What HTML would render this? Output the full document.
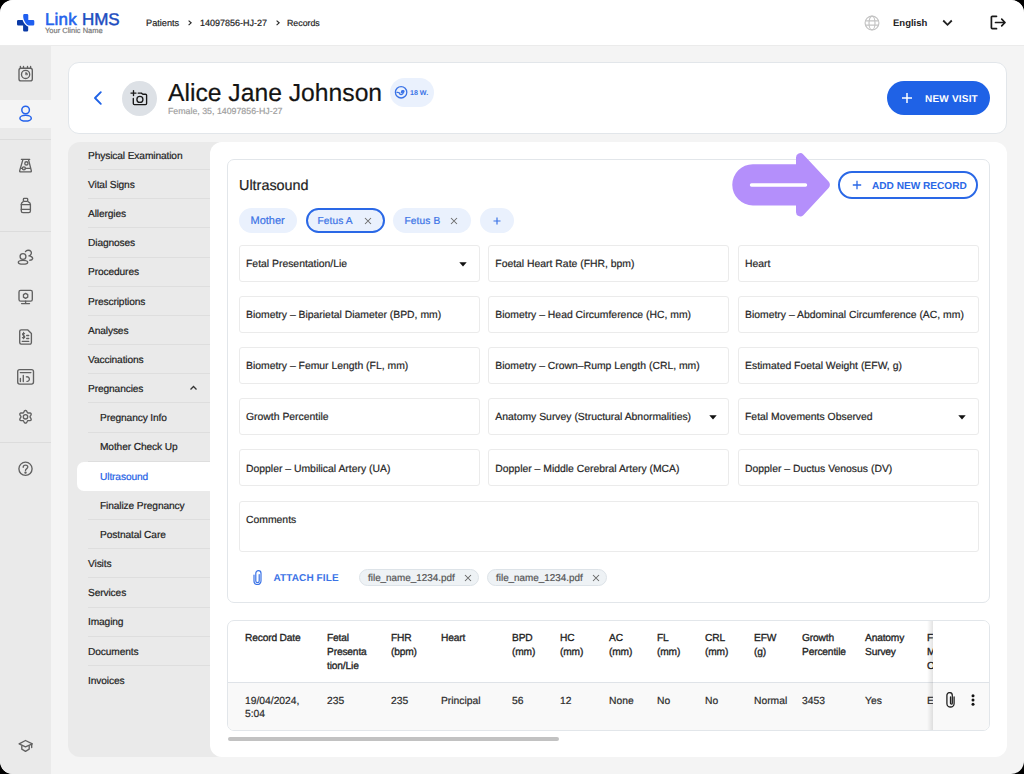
<!DOCTYPE html>
<html><head><meta charset="utf-8">
<style>
*{box-sizing:border-box;margin:0;padding:0}
html,body{width:1024px;height:774px;overflow:hidden;background:#000}
body{font-family:"Liberation Sans",sans-serif;color:#222}
#screen{position:absolute;left:0;top:0;width:1024px;height:774px;background:#f4f4f4;border-radius:13px;overflow:hidden}
.abs{position:absolute}
.t{position:absolute;white-space:nowrap;line-height:1;text-rendering:geometricPrecision;-webkit-text-stroke:0.2px currentColor}
</style></head>
<body>
<div id="screen">
<div class="abs" style="left:0px;top:0px;width:1024px;height:45px;background:#fff"></div>
<div class="abs" style="left:0px;top:45px;width:1024px;height:1px;background:#ebebeb"></div>
<div class="abs" style="left:0px;top:46px;width:51px;height:728px;background:#eaeaea"></div>
<div class="abs" style="left:0px;top:100px;width:51px;height:28px;background:#f4f4f4"></div>
<div class="abs" style="left:0px;top:139px;width:51px;height:1px;background:#dcdcdc"></div>
<div class="abs" style="left:0px;top:231px;width:51px;height:1px;background:#dcdcdc"></div>
<div class="abs" style="left:0px;top:442px;width:51px;height:1px;background:#dcdcdc"></div>
<svg class="abs" style="left:17px;top:14px" width="18" height="18" viewBox="0 0 18 18">
<path d="M6.2 1.3Q6.2 0 7.5 0H10Q11.3 0 11.3 1.3V6H16Q17.3 6 17.3 7.3V10.2Q17.3 11.6 16 11.6H12C9.5 11.2 6.6 7 6.2 3Z" fill="#1f5ff0"/>
<path d="M0 7.3Q0 6 1.3 6H5.6C6.5 9 9.2 12 11.2 12.6V16.2Q11.2 17.5 9.9 17.5H7.4Q6.1 17.5 6.1 16.2V11.6H1.3Q0 11.6 0 10.3Z" fill="#0a3aa6"/>
</svg>
<div class="t" style="left:45.00px;top:11px;font-size:17px;color:#2563eb;letter-spacing:0.15px;-webkit-text-stroke:0.55px #2563eb">Link</div>
<div class="t" style="left:82.00px;top:11px;font-size:17px;color:#1c4cc0;letter-spacing:-0.1px;-webkit-text-stroke:0.45px #1c4cc0">HMS</div>
<div class="t" style="left:45.00px;top:27px;font-size:7.5px;color:#7a7a7a">Your Clinic Name</div>
<div class="t" style="left:146.00px;top:19px;font-size:9.2px;color:#1e1e1e">Patients</div>
<svg class="abs" style="left:186px;top:19px" width="8" height="8" viewBox="0 0 8 8"><path d="M2.6 1.6L5.1 3.85L2.6 6.1" fill="none" stroke="#2a2a2a" stroke-width="1.2"/></svg>
<div class="t" style="left:200.00px;top:19px;font-size:9.0px;color:#1e1e1e">14097856-HJ-27</div>
<svg class="abs" style="left:273.5px;top:19px" width="8" height="8" viewBox="0 0 8 8"><path d="M2.6 1.6L5.1 3.85L2.6 6.1" fill="none" stroke="#2a2a2a" stroke-width="1.2"/></svg>
<div class="t" style="left:287.00px;top:19px;font-size:8.8px;color:#1e1e1e">Records</div>
<svg class="abs" style="left:864px;top:15px" width="16" height="16" viewBox="0 0 16 16" fill="none" stroke="#c4c4c4" stroke-width="1.2"><circle cx="8" cy="8" r="6.9"/><ellipse cx="8" cy="8" rx="3" ry="6.9"/><path d="M1.3 5.8h13.4M1.3 10.2h13.4"/></svg>
<div class="t" style="left:893.00px;top:19px;font-size:9.5px;color:#222;font-weight:700;-webkit-text-stroke:0">English</div>
<svg class="abs" style="left:942px;top:19px" width="11" height="8" viewBox="0 0 11 8"><path d="M1.2 1.5L5.5 5.8L9.8 1.5" fill="none" stroke="#222" stroke-width="1.8"/></svg>
<svg class="abs" style="left:990px;top:15px" width="17" height="15" viewBox="0 0 17 15" fill="none" stroke="#1a1a1a" stroke-width="1.7" stroke-linecap="round" stroke-linejoin="round"><path d="M6.5 1.3H2.3a0.9 0.9 0 0 0-0.9 0.9v10.6a0.9 0.9 0 0 0 0.9 0.9h4.2"/><path d="M5.5 7.5h9.5M11.7 4.2l3.3 3.3l-3.3 3.3"/></svg>
<svg class="abs" style="left:0;top:45px" width="51" height="729" viewBox="0 45 51 729" fill="none" stroke="#616161" stroke-width="1.35" stroke-linecap="round" stroke-linejoin="round">
<rect x="19" y="68.2" width="13.3" height="12.7" rx="2"/>
<path d="M20.4 66.4v1.8M23.5 66.4v1.8M27.5 66.4v1.8M30.6 66.4v1.8"/>
<circle cx="25.6" cy="74.4" r="4.1"/>
<path d="M25.6 74.5V72.4A2.1 2.1 0 0 1 27.6 74.5Z" fill="#616161" stroke-width="0.6"/>
<g stroke="#2563eb" stroke-width="1.5"><circle cx="25.6" cy="110" r="3.8"/><ellipse cx="25.6" cy="118.2" rx="5.7" ry="2.9"/></g>
<path d="M21.4 159.3h8.3"/>
<path d="M22.9 159.6L19.7 170.6Q19.4 171.8 20.6 171.8H30.4Q31.6 171.8 31.3 170.6L28.5 159.6"/>
<path d="M21.1 168.3h1.3M25.4 168.3h4.8"/>
<circle cx="26.4" cy="163.4" r="1.6"/><circle cx="23.9" cy="168.3" r="1.5"/>
<rect x="23.4" y="198.4" width="4.3" height="3" rx="0.8"/>
<path d="M23.2 201.6Q21.3 202.6 21.3 204.2V211a1.6 1.6 0 0 0 1.6 1.6H28.8a1.6 1.6 0 0 0 1.6-1.6V204.2Q30.4 202.6 28 201.6"/>
<path d="M21.3 204.6h9.1M21.3 209.4h9.1"/>
<circle cx="23" cy="256.5" r="2.9"/>
<ellipse cx="23" cy="262.2" rx="4.7" ry="1.9"/>
<path d="M25.5 251.6C26.5 250 29.5 249.6 30.9 251.4C32 253 31 255.5 28.9 255.9C31 256 33 257.5 32.6 258.8C32.3 259.8 31 260.2 29.8 260.2"/>
<rect x="19" y="290.4" width="13.3" height="10.7" rx="1.6"/>
<path d="M25.6 301.1v2.5M21.6 303.6h7.9"/>
<path d="M25.6 293.4L27.75 294.65V297.15L25.6 298.4L23.45 297.15V294.65Z" stroke-width="1.3"/>
<path d="M21 329.8H27.6L31.4 333.5V342.6A1.5 1.5 0 0 1 29.9 344.1H21.2A1.5 1.5 0 0 1 19.7 342.6V331.3A1.5 1.5 0 0 1 21.2 329.8Z"/>
<path d="M22.3 341.4h6.4M26.7 335.5h2M26.7 338.5h2"/>
<path d="M24.6 333.6C24 333 22.5 333.1 22.5 334.3C22.5 335.6 24.8 335.4 24.8 336.9C24.8 338.1 23.2 338.2 22.4 337.5M23.6 332.2v6.6" stroke-width="1.1"/>
<rect x="17.7" y="369.6" width="15.8" height="14.5" rx="2"/>
<path d="M20.3 372.6h10.6M20.4 378.5v3.1M23.3 375.4v6.2"/>
<path d="M26.4 376.9A2.3 2.3 0 1 1 27 381.4"/>
<path d="M30.00 416.80L30.11 416.40L30.40 415.94L30.76 415.39L31.07 414.77L31.19 414.15L31.04 413.60L30.64 413.20L30.04 412.99L29.35 412.95L28.70 412.99L28.15 413.01L27.75 412.90L27.46 412.61L27.20 412.13L26.91 411.54L26.53 410.97L26.05 410.55L25.50 410.40L24.95 410.55L24.47 410.97L24.09 411.54L23.80 412.13L23.54 412.61L23.25 412.90L22.85 413.01L22.30 412.99L21.65 412.95L20.96 412.99L20.36 413.20L19.96 413.60L19.81 414.15L19.93 414.77L20.24 415.39L20.60 415.94L20.89 416.40L21.00 416.80L20.89 417.20L20.60 417.66L20.24 418.21L19.93 418.83L19.81 419.45L19.96 420.00L20.36 420.40L20.96 420.61L21.65 420.65L22.30 420.61L22.85 420.59L23.25 420.70L23.54 420.99L23.80 421.47L24.09 422.06L24.47 422.63L24.95 423.05L25.50 423.20L26.05 423.05L26.53 422.63L26.91 422.06L27.20 421.47L27.46 420.99L27.75 420.70L28.15 420.59L28.70 420.61L29.35 420.65L30.04 420.61L30.64 420.40L31.04 420.00L31.19 419.45L31.07 418.83L30.76 418.21L30.40 417.66L30.11 417.20L30.00 416.80Z"/>
<circle cx="25.5" cy="416.8" r="2.2"/>
<circle cx="25.5" cy="468.8" r="6.6"/>
<path d="M23.2 467.2C23.2 465.9 24.2 465.1 25.5 465.1C26.8 465.1 27.8 465.9 27.8 467C27.8 468.6 25.5 468.7 25.5 470.6"/>
<circle cx="25.5" cy="472.6" r="0.55" fill="#616161"/>
<path d="M19.1 743.9L25.5 740.5L32.3 743.8L25.5 746.9Z"/>
<path d="M21.8 745.9V749.2L25.5 751.3L29.2 749.2V745.9M31.7 744.2V747.6"/>
</svg>
<div class="abs" style="left:68px;top:62px;width:939px;height:72px;background:#fff;border:1px solid #e2e6ea;border-radius:11px"></div>
<svg class="abs" style="left:92px;top:90px" width="12" height="16" viewBox="0 0 12 16"><path d="M8.8 2.2L3 8L8.8 13.8" fill="none" stroke="#1f62e6" stroke-width="1.9" stroke-linecap="round" stroke-linejoin="round"/></svg>
<div class="abs" style="left:122px;top:81px;width:35px;height:35px;border-radius:50%;background:#dde1e6"></div>
<svg class="abs" style="left:128px;top:86px" width="24" height="24" viewBox="128 86 24 24" fill="none" stroke="#1a1a1a" stroke-width="1.35" stroke-linecap="round" stroke-linejoin="round">
<path d="M133.5 90.6v5M131 93.1h5"/>
<path d="M133.3 98.4V103.5Q133.3 104.6 134.4 104.6H145.5Q146.6 104.6 146.6 103.5V95.3Q146.6 94.2 145.5 94.2H142.8L141.4 93.1H138.2"/>
<circle cx="139.9" cy="99.4" r="3"/></svg>
<div class="t" style="left:168.00px;top:82px;font-size:24.7px;color:#141414">Alice Jane Johnson</div>
<div class="t" style="left:168.00px;top:107px;font-size:8.8px;color:#a0a0a0">Female, 35, 14097856-HJ-27</div>
<div class="abs" style="left:390px;top:78px;width:44px;height:29px;border-radius:15px;background:#eaf1fd"></div>
<svg class="abs" style="left:392px;top:83px" width="18" height="18" viewBox="0 0 18 18" fill="none" stroke="#3b73e6" stroke-width="1.3" stroke-linecap="round">
<circle cx="9.1" cy="9.3" r="5.7"/>
<path d="M5 9.4Q6.2 9.1 7.2 9.8Q7.8 11.8 9.2 11.6Q10.8 11.4 11.4 9.6"/>
<path d="M9.3 9.5Q9.7 7.9 11.2 8"/>
<ellipse cx="10.9" cy="8.5" rx="1.1" ry="0.8"/></svg>
<div class="t" style="left:410.00px;top:90px;font-size:7.1px;color:#3b73e6;font-weight:700;-webkit-text-stroke:0">18 W.</div>
<div class="abs" style="left:887px;top:81px;width:103px;height:34px;border-radius:17px;background:#1f62e6"></div>
<svg class="abs" style="left:901px;top:92px" width="12" height="12" viewBox="0 0 12 12"><path d="M6 1v10M1 6h10" stroke="#fff" stroke-width="1.5"/></svg>
<div class="t" style="left:925.00px;top:95px;font-size:10px;color:#fff;font-weight:700;-webkit-text-stroke:0;letter-spacing:0.2px">NEW VISIT</div>
<div class="abs" style="left:68px;top:142px;width:160px;height:615px;border-radius:12px;background:#eaeaea"></div>
<div class="abs" style="left:88px;top:169px;width:122px;height:1px;background:#dedede"></div>
<div class="abs" style="left:88px;top:198px;width:122px;height:1px;background:#dedede"></div>
<div class="abs" style="left:88px;top:227px;width:122px;height:1px;background:#dedede"></div>
<div class="abs" style="left:88px;top:257px;width:122px;height:1px;background:#dedede"></div>
<div class="abs" style="left:88px;top:286px;width:122px;height:1px;background:#dedede"></div>
<div class="abs" style="left:88px;top:315px;width:122px;height:1px;background:#dedede"></div>
<div class="abs" style="left:88px;top:344px;width:122px;height:1px;background:#dedede"></div>
<div class="abs" style="left:88px;top:373px;width:122px;height:1px;background:#dedede"></div>
<div class="abs" style="left:88px;top:402px;width:122px;height:1px;background:#dedede"></div>
<div class="abs" style="left:88px;top:432px;width:122px;height:1px;background:#dedede"></div>
<div class="abs" style="left:88px;top:461px;width:122px;height:1px;background:#dedede"></div>
<div class="abs" style="left:88px;top:519px;width:122px;height:1px;background:#dedede"></div>
<div class="abs" style="left:88px;top:548px;width:122px;height:1px;background:#dedede"></div>
<div class="abs" style="left:88px;top:577px;width:122px;height:1px;background:#dedede"></div>
<div class="abs" style="left:88px;top:607px;width:122px;height:1px;background:#dedede"></div>
<div class="abs" style="left:88px;top:636px;width:122px;height:1px;background:#dedede"></div>
<div class="abs" style="left:88px;top:665px;width:122px;height:1px;background:#dedede"></div>
<div class="t" style="left:88.00px;top:152px;font-size:10.2px;color:#222;letter-spacing:-0.12px">Physical Examination</div>
<div class="t" style="left:88.00px;top:181px;font-size:10.2px;color:#222;letter-spacing:-0.12px">Vital Signs</div>
<div class="t" style="left:88.00px;top:210px;font-size:10.2px;color:#222;letter-spacing:-0.12px">Allergies</div>
<div class="t" style="left:88.00px;top:239px;font-size:10.2px;color:#222;letter-spacing:-0.12px">Diagnoses</div>
<div class="t" style="left:88.00px;top:268px;font-size:10.2px;color:#222;letter-spacing:-0.12px">Procedures</div>
<div class="t" style="left:88.00px;top:298px;font-size:10.2px;color:#222;letter-spacing:-0.12px">Prescriptions</div>
<div class="t" style="left:88.00px;top:327px;font-size:10.2px;color:#222;letter-spacing:-0.12px">Analyses</div>
<div class="t" style="left:88.00px;top:356px;font-size:10.2px;color:#222;letter-spacing:-0.12px">Vaccinations</div>
<div class="t" style="left:88.00px;top:385px;font-size:10.2px;color:#222;letter-spacing:-0.12px">Pregnancies</div>
<div class="t" style="left:100.00px;top:414px;font-size:10.2px;color:#222;letter-spacing:-0.12px">Pregnancy Info</div>
<div class="t" style="left:100.00px;top:443px;font-size:10.2px;color:#222;letter-spacing:-0.12px">Mother Check Up</div>
<div class="abs" style="left:77px;top:462px;width:140px;height:28.5px;background:#fff;border-radius:7px 0 0 7px"></div>
<div class="t" style="left:100.00px;top:473px;font-size:10.2px;color:#1f62e6;letter-spacing:-0.12px">Ultrasound</div>
<div class="t" style="left:100.00px;top:502px;font-size:10.2px;color:#222;letter-spacing:-0.12px">Finalize Pregnancy</div>
<div class="t" style="left:100.00px;top:531px;font-size:10.2px;color:#222;letter-spacing:-0.12px">Postnatal Care</div>
<div class="t" style="left:88.00px;top:560px;font-size:10.2px;color:#222;letter-spacing:-0.12px">Visits</div>
<div class="t" style="left:88.00px;top:589px;font-size:10.2px;color:#222;letter-spacing:-0.12px">Services</div>
<div class="t" style="left:88.00px;top:618px;font-size:10.2px;color:#222;letter-spacing:-0.12px">Imaging</div>
<div class="t" style="left:88.00px;top:648px;font-size:10.2px;color:#222;letter-spacing:-0.12px">Documents</div>
<div class="t" style="left:88.00px;top:677px;font-size:10.2px;color:#222;letter-spacing:-0.12px">Invoices</div>
<svg class="abs" style="left:189px;top:385px" width="9" height="6" viewBox="0 0 9 6"><path d="M1.5 4.5L4.5 1.5L7.5 4.5" fill="none" stroke="#333" stroke-width="1.3"/></svg>
<div class="abs" style="left:210px;top:142px;width:797px;height:615px;border-radius:12px;background:#fff"></div>
<div class="abs" style="left:227px;top:159px;width:763px;height:444px;background:#fff;border:1px solid #e2e6ea;border-radius:7px"></div>
<div class="t" style="left:239.00px;top:179px;font-size:14.4px;color:#1e1e1e">Ultrasound</div>
<div class="abs" style="left:239px;top:208px;width:58px;height:25px;border-radius:13px;background:#eaf1fd"></div>
<div class="abs" style="left:306px;top:208px;width:79px;height:25px;border-radius:13px;background:#eaf1fd;border:2px solid #2a68e6"></div>
<div class="abs" style="left:393px;top:208px;width:78px;height:25px;border-radius:13px;background:#eaf1fd"></div>
<div class="abs" style="left:480px;top:208px;width:34px;height:25px;border-radius:13px;background:#eaf1fd"></div>
<div class="t" style="left:250.50px;top:216px;font-size:11px;color:#3b73e6">Mother</div>
<div class="t" style="left:317.50px;top:217px;font-size:10.2px;color:#3b73e6;letter-spacing:0.1px">Fetus A</div>
<div class="t" style="left:404.50px;top:217px;font-size:10.2px;color:#3b73e6;letter-spacing:0.1px">Fetus B</div>
<svg class="abs" style="left:364px;top:216.5px" width="8" height="8" viewBox="0 0 8 8"><path d="M1 1L7 7M7 1L1 7" stroke="#6b6b6b" stroke-width="1.05"/></svg>
<svg class="abs" style="left:450px;top:216.5px" width="8" height="8" viewBox="0 0 8 8"><path d="M1 1L7 7M7 1L1 7" stroke="#6b6b6b" stroke-width="1.05"/></svg>
<svg class="abs" style="left:493px;top:216.5px" width="8" height="8" viewBox="0 0 8 8"><path d="M4 0.5v7M0.5 4h7" stroke="#3b73e6" stroke-width="1.2"/></svg>
<div class="abs" style="left:838px;top:171px;width:140px;height:28px;border-radius:14px;border:2px solid #2a68e6;background:#fff"></div>
<svg class="abs" style="left:851.5px;top:179.8px" width="10" height="10" viewBox="0 0 10 10"><path d="M5 0.8v8.4M0.8 5h8.4" stroke="#2a68e6" stroke-width="1.3"/></svg>
<div class="t" style="left:872.00px;top:182px;font-size:10.1px;color:#2a68e6;font-weight:700;-webkit-text-stroke:0">ADD NEW RECORD</div>
<svg class="abs" style="left:730px;top:150px" width="104" height="70" viewBox="730 150 104 70">
<path d="M752.8 164.3H796V157.5A4.3 4.3 0 0 1 803.3 154.4L828.6 181.6A4.6 4.6 0 0 1 828.6 188L803.3 215.2A4.3 4.3 0 0 1 796 212.2V205.4H752.8A20.55 20.55 0 0 1 752.8 164.3Z" fill="#b48ffb"/>
<path d="M751.5 185H805.5" stroke="#fff" stroke-width="3.4" stroke-linecap="round"/></svg>
<div class="abs" style="left:239px;top:245px;width:240.7px;height:36.5px;border:1px solid #ebebeb;border-radius:3px"></div>
<div class="t" style="left:246.00px;top:260px;font-size:10.4px;color:#262626">Fetal Presentation/Lie</div>
<svg class="abs" style="left:459.2px;top:261.5px" width="8" height="5" viewBox="0 0 8 5"><path d="M0.3 0.3H7.7L4 4.5Z" fill="#111"/></svg>
<div class="abs" style="left:488.3px;top:245px;width:240.7px;height:36.5px;border:1px solid #ebebeb;border-radius:3px"></div>
<div class="t" style="left:495.30px;top:260px;font-size:10.4px;color:#262626">Foetal Heart Rate (FHR, bpm)</div>
<div class="abs" style="left:738px;top:245px;width:240.7px;height:36.5px;border:1px solid #ebebeb;border-radius:3px"></div>
<div class="t" style="left:745.00px;top:260px;font-size:10.4px;color:#262626">Heart</div>
<div class="abs" style="left:239px;top:296px;width:240.7px;height:36.5px;border:1px solid #ebebeb;border-radius:3px"></div>
<div class="t" style="left:246.00px;top:311px;font-size:10.4px;color:#262626">Biometry – Biparietal Diameter (BPD, mm)</div>
<div class="abs" style="left:488.3px;top:296px;width:240.7px;height:36.5px;border:1px solid #ebebeb;border-radius:3px"></div>
<div class="t" style="left:495.30px;top:311px;font-size:10.4px;color:#262626">Biometry – Head Circumference (HC, mm)</div>
<div class="abs" style="left:738px;top:296px;width:240.7px;height:36.5px;border:1px solid #ebebeb;border-radius:3px"></div>
<div class="t" style="left:745.00px;top:311px;font-size:10.4px;color:#262626">Biometry – Abdominal Circumference (AC, mm)</div>
<div class="abs" style="left:239px;top:347.1px;width:240.7px;height:36.5px;border:1px solid #ebebeb;border-radius:3px"></div>
<div class="t" style="left:246.00px;top:362px;font-size:10.4px;color:#262626">Biometry – Femur Length (FL, mm)</div>
<div class="abs" style="left:488.3px;top:347.1px;width:240.7px;height:36.5px;border:1px solid #ebebeb;border-radius:3px"></div>
<div class="t" style="left:495.30px;top:362px;font-size:10.4px;color:#262626">Biometry – Crown–Rump Length (CRL, mm)</div>
<div class="abs" style="left:738px;top:347.1px;width:240.7px;height:36.5px;border:1px solid #ebebeb;border-radius:3px"></div>
<div class="t" style="left:745.00px;top:362px;font-size:10.4px;color:#262626">Estimated Foetal Weight (EFW, g)</div>
<div class="abs" style="left:239px;top:398.3px;width:240.7px;height:36.5px;border:1px solid #ebebeb;border-radius:3px"></div>
<div class="t" style="left:246.00px;top:413px;font-size:10.4px;color:#262626">Growth Percentile</div>
<div class="abs" style="left:488.3px;top:398.3px;width:240.7px;height:36.5px;border:1px solid #ebebeb;border-radius:3px"></div>
<div class="t" style="left:495.30px;top:413px;font-size:10.4px;color:#262626">Anatomy Survey (Structural Abnormalities)</div>
<svg class="abs" style="left:708.5px;top:414.8px" width="8" height="5" viewBox="0 0 8 5"><path d="M0.3 0.3H7.7L4 4.5Z" fill="#111"/></svg>
<div class="abs" style="left:738px;top:398.3px;width:240.7px;height:36.5px;border:1px solid #ebebeb;border-radius:3px"></div>
<div class="t" style="left:745.00px;top:413px;font-size:10.4px;color:#262626">Fetal Movements Observed</div>
<svg class="abs" style="left:958.2px;top:414.8px" width="8" height="5" viewBox="0 0 8 5"><path d="M0.3 0.3H7.7L4 4.5Z" fill="#111"/></svg>
<div class="abs" style="left:239px;top:449.4px;width:240.7px;height:36.5px;border:1px solid #ebebeb;border-radius:3px"></div>
<div class="t" style="left:246.00px;top:465px;font-size:10.4px;color:#262626">Doppler – Umbilical Artery (UA)</div>
<div class="abs" style="left:488.3px;top:449.4px;width:240.7px;height:36.5px;border:1px solid #ebebeb;border-radius:3px"></div>
<div class="t" style="left:495.30px;top:465px;font-size:10.4px;color:#262626">Doppler – Middle Cerebral Artery (MCA)</div>
<div class="abs" style="left:738px;top:449.4px;width:240.7px;height:36.5px;border:1px solid #ebebeb;border-radius:3px"></div>
<div class="t" style="left:745.00px;top:465px;font-size:10.4px;color:#262626">Doppler – Ductus Venosus (DV)</div>
<div class="abs" style="left:239px;top:501px;width:740px;height:50.5px;border:1px solid #ebebeb;border-radius:3px"></div>
<div class="t" style="left:246.00px;top:516px;font-size:10.4px;color:#262626">Comments</div>
<svg class="abs" style="left:252px;top:570px" width="11" height="15" viewBox="0 0 11 15" fill="none" stroke="#3b73e6" stroke-width="1.2" stroke-linecap="round"><path d="M7.2 4.5V11a1.7 1.7 0 0 1-3.4 0V3.2a2.6 2.6 0 0 1 5.2 0V11a3.5 3.5 0 0 1-7 0V5"/></svg>
<div class="t" style="left:273.50px;top:574px;font-size:10px;color:#3b73e6;font-weight:700;-webkit-text-stroke:0;letter-spacing:0.1px">ATTACH FILE</div>
<div class="abs" style="left:359px;top:569px;width:120px;height:17px;border-radius:9px;background:#eef2f5;border:1px solid #dde3e8"></div>
<div class="t" style="left:368.00px;top:574px;font-size:9.9px;color:#555">file_name_1234.pdf</div>
<svg class="abs" style="left:463.5px;top:573.5px" width="8" height="8" viewBox="0 0 8 8"><path d="M1 1L7 7M7 1L1 7" stroke="#666" stroke-width="1.05"/></svg>
<div class="abs" style="left:487px;top:569px;width:120px;height:17px;border-radius:9px;background:#eef2f5;border:1px solid #dde3e8"></div>
<div class="t" style="left:496.00px;top:574px;font-size:9.9px;color:#555">file_name_1234.pdf</div>
<svg class="abs" style="left:591.5px;top:573.5px" width="8" height="8" viewBox="0 0 8 8"><path d="M1 1L7 7M7 1L1 7" stroke="#666" stroke-width="1.05"/></svg>
<div class="abs" style="left:227px;top:620px;width:763px;height:111px;background:#fff;border:1px solid #e2e6ea;border-radius:7px;overflow:hidden"></div>
<div class="abs" style="left:228px;top:682px;width:761px;height:48px;background:#f9f9f9;border-top:1px solid #dfe3e8;border-radius:0 0 6px 6px"></div>
<div class="abs" style="left:228px;top:621px;width:705px;height:109px;overflow:hidden">
<div class="t" style="left:17.00px;top:13px;font-size:10.2px;color:#222;letter-spacing:-0.15px;-webkit-text-stroke:0.3px #222">Record Date</div>
<div class="t" style="left:99.00px;top:13px;font-size:10.2px;color:#222;letter-spacing:-0.15px;-webkit-text-stroke:0.3px #222">Fetal</div>
<div class="t" style="left:99.00px;top:27px;font-size:10.2px;color:#222;letter-spacing:-0.15px;-webkit-text-stroke:0.3px #222">Presenta</div>
<div class="t" style="left:99.00px;top:41px;font-size:10.2px;color:#222;letter-spacing:-0.15px;-webkit-text-stroke:0.3px #222">tion/Lie</div>
<div class="t" style="left:163.00px;top:13px;font-size:10.2px;color:#222;letter-spacing:-0.15px;-webkit-text-stroke:0.3px #222">FHR</div>
<div class="t" style="left:163.00px;top:27px;font-size:10.2px;color:#222;letter-spacing:-0.15px;-webkit-text-stroke:0.3px #222">(bpm)</div>
<div class="t" style="left:213.00px;top:13px;font-size:10.2px;color:#222;letter-spacing:-0.15px;-webkit-text-stroke:0.3px #222">Heart</div>
<div class="t" style="left:284.00px;top:13px;font-size:10.2px;color:#222;letter-spacing:-0.15px;-webkit-text-stroke:0.3px #222">BPD</div>
<div class="t" style="left:284.00px;top:27px;font-size:10.2px;color:#222;letter-spacing:-0.15px;-webkit-text-stroke:0.3px #222">(mm)</div>
<div class="t" style="left:332.00px;top:13px;font-size:10.2px;color:#222;letter-spacing:-0.15px;-webkit-text-stroke:0.3px #222">HC</div>
<div class="t" style="left:332.00px;top:27px;font-size:10.2px;color:#222;letter-spacing:-0.15px;-webkit-text-stroke:0.3px #222">(mm)</div>
<div class="t" style="left:381.00px;top:13px;font-size:10.2px;color:#222;letter-spacing:-0.15px;-webkit-text-stroke:0.3px #222">AC</div>
<div class="t" style="left:381.00px;top:27px;font-size:10.2px;color:#222;letter-spacing:-0.15px;-webkit-text-stroke:0.3px #222">(mm)</div>
<div class="t" style="left:429.00px;top:13px;font-size:10.2px;color:#222;letter-spacing:-0.15px;-webkit-text-stroke:0.3px #222">FL</div>
<div class="t" style="left:429.00px;top:27px;font-size:10.2px;color:#222;letter-spacing:-0.15px;-webkit-text-stroke:0.3px #222">(mm)</div>
<div class="t" style="left:477.00px;top:13px;font-size:10.2px;color:#222;letter-spacing:-0.15px;-webkit-text-stroke:0.3px #222">CRL</div>
<div class="t" style="left:477.00px;top:27px;font-size:10.2px;color:#222;letter-spacing:-0.15px;-webkit-text-stroke:0.3px #222">(mm)</div>
<div class="t" style="left:526.00px;top:13px;font-size:10.2px;color:#222;letter-spacing:-0.15px;-webkit-text-stroke:0.3px #222">EFW</div>
<div class="t" style="left:526.00px;top:27px;font-size:10.2px;color:#222;letter-spacing:-0.15px;-webkit-text-stroke:0.3px #222">(g)</div>
<div class="t" style="left:574.00px;top:13px;font-size:10.2px;color:#222;letter-spacing:-0.15px;-webkit-text-stroke:0.3px #222">Growth</div>
<div class="t" style="left:574.00px;top:27px;font-size:10.2px;color:#222;letter-spacing:-0.15px;-webkit-text-stroke:0.3px #222">Percentile</div>
<div class="t" style="left:637.00px;top:13px;font-size:10.2px;color:#222;letter-spacing:-0.15px;-webkit-text-stroke:0.3px #222">Anatomy</div>
<div class="t" style="left:637.00px;top:27px;font-size:10.2px;color:#222;letter-spacing:-0.15px;-webkit-text-stroke:0.3px #222">Survey</div>
<div class="t" style="left:699.00px;top:13px;font-size:10.2px;color:#222;letter-spacing:-0.15px;-webkit-text-stroke:0.3px #222">Fetal</div>
<div class="t" style="left:699.00px;top:27px;font-size:10.2px;color:#222;letter-spacing:-0.15px;-webkit-text-stroke:0.3px #222">Movements</div>
<div class="t" style="left:699.00px;top:41px;font-size:10.2px;color:#222;letter-spacing:-0.15px;-webkit-text-stroke:0.3px #222">Observed</div>
<div class="t" style="left:17.00px;top:76px;font-size:10.3px;color:#2a2a2a">19/04/2024,</div>
<div class="t" style="left:17.00px;top:89px;font-size:10.3px;color:#2a2a2a">5:04</div>
<div class="t" style="left:99.00px;top:76px;font-size:10.3px;color:#2a2a2a">235</div>
<div class="t" style="left:163.00px;top:76px;font-size:10.3px;color:#2a2a2a">235</div>
<div class="t" style="left:213.00px;top:76px;font-size:10.3px;color:#2a2a2a">Principal</div>
<div class="t" style="left:284.00px;top:76px;font-size:10.3px;color:#2a2a2a">56</div>
<div class="t" style="left:332.00px;top:76px;font-size:10.3px;color:#2a2a2a">12</div>
<div class="t" style="left:381.00px;top:76px;font-size:10.3px;color:#2a2a2a">None</div>
<div class="t" style="left:429.00px;top:76px;font-size:10.3px;color:#2a2a2a">No</div>
<div class="t" style="left:477.00px;top:76px;font-size:10.3px;color:#2a2a2a">No</div>
<div class="t" style="left:526.00px;top:76px;font-size:10.3px;color:#2a2a2a">Normal</div>
<div class="t" style="left:574.00px;top:76px;font-size:10.3px;color:#2a2a2a">3453</div>
<div class="t" style="left:637.00px;top:76px;font-size:10.3px;color:#2a2a2a">Yes</div>
<div class="t" style="left:699.00px;top:76px;font-size:10.3px;color:#2a2a2a">Excellent</div>
</div>
<div class="abs" style="left:927px;top:621px;width:6px;height:109px;background:linear-gradient(90deg,rgba(0,0,0,0),rgba(0,0,0,0.11))"></div>
<div class="abs" style="left:933px;top:621px;width:56px;height:61px;background:#fff;border-radius:0 6px 0 0"></div>
<div class="abs" style="left:933px;top:682px;width:56px;height:48px;background:#f9f9f9;border-top:1px solid #dfe3e8;border-radius:0 0 6px 0"></div>
<svg class="abs" style="left:944.5px;top:692px" width="11" height="16" viewBox="0 0 11 16" fill="none" stroke="#222" stroke-width="1.3" stroke-linecap="round"><path d="M9.1 5V11.4a3.6 3.6 0 0 1-7.2 0V3.3a2.7 2.7 0 0 1 5.4 0V11.2a0.9 0.9 0 0 1-1.8 0V5"/></svg>
<svg class="abs" style="left:970px;top:694px" width="6" height="12" viewBox="0 0 6 12" fill="#111"><circle cx="3" cy="1.7" r="1.5"/><circle cx="3" cy="6" r="1.5"/><circle cx="3" cy="10.3" r="1.5"/></svg>
<div class="abs" style="left:228px;top:737px;width:331px;height:4px;border-radius:2px;background:#c2c2c2"></div>
</div>
</body></html>
